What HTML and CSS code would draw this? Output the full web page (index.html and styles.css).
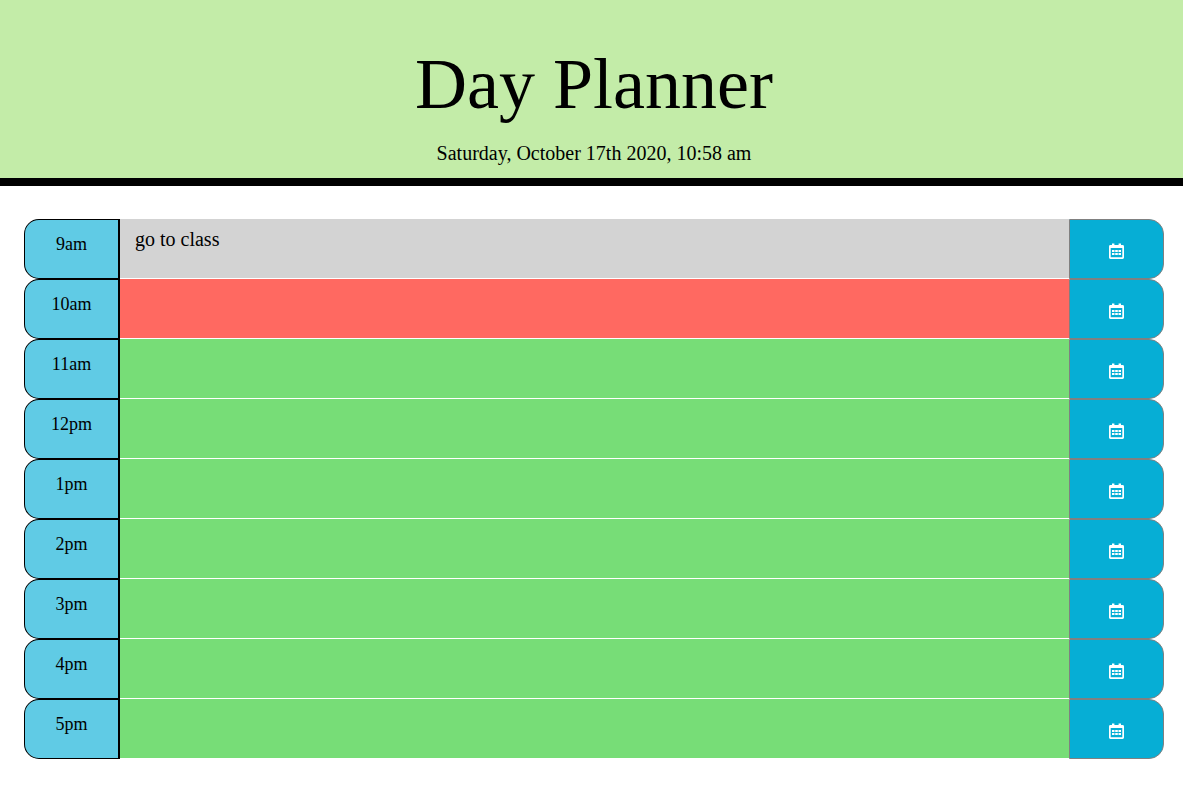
FILE: index.html
```html
<!DOCTYPE html>
<html lang="en">
<head>
<meta charset="utf-8">
<meta name="viewport" content="width=device-width, initial-scale=1">
<title>Day Planner</title>
<link rel="stylesheet" href="styles.css">
</head>
<body>
<svg class="sprite" aria-hidden="true">
  <symbol id="calendar" viewBox="0 0 15 16">
    <path fill="currentColor" fill-rule="evenodd" d="M3 .4h2.4V2h4.2V.4H12V2h1.6q1.4 0 1.4 1.4v11.2q0 1.4-1.4 1.4H1.4Q0 16 0 14.600V3.400Q0 2 1.400 2H3zM1.700 5v9.300h11.600V5z"/>
    <path fill="currentColor" d="M3 7h2.500v2H3zM6.200 7h2.600v2H6.200zM9.500 7H12v2H9.500zM3 10h2.500v2H3zM6.200 10h2.600v2H6.200zM9.500 10H12v2H9.500z"/>
  </symbol>
</svg>
<header class="banner">
  <h1 class="title">Day Planner</h1>
  <p class="date">Saturday, October 17th 2020, 10:58 am</p>
</header>
<main class="schedule">
  <div class="row">
    <label class="hour" for="h9">9am</label>
    <textarea class="entry past" id="h9">go to class</textarea>
    <button class="save" type="button" aria-label="Save 9am"><svg class="icon"><use href="#calendar"/></svg></button>
  </div>
  <div class="row">
    <label class="hour" for="h10">10am</label>
    <textarea class="entry present" id="h10"></textarea>
    <button class="save" type="button" aria-label="Save 10am"><svg class="icon"><use href="#calendar"/></svg></button>
  </div>
  <div class="row">
    <label class="hour" for="h11">11am</label>
    <textarea class="entry future" id="h11"></textarea>
    <button class="save" type="button" aria-label="Save 11am"><svg class="icon"><use href="#calendar"/></svg></button>
  </div>
  <div class="row">
    <label class="hour" for="h12">12pm</label>
    <textarea class="entry future" id="h12"></textarea>
    <button class="save" type="button" aria-label="Save 12pm"><svg class="icon"><use href="#calendar"/></svg></button>
  </div>
  <div class="row">
    <label class="hour" for="h13">1pm</label>
    <textarea class="entry future" id="h13"></textarea>
    <button class="save" type="button" aria-label="Save 1pm"><svg class="icon"><use href="#calendar"/></svg></button>
  </div>
  <div class="row">
    <label class="hour" for="h14">2pm</label>
    <textarea class="entry future" id="h14"></textarea>
    <button class="save" type="button" aria-label="Save 2pm"><svg class="icon"><use href="#calendar"/></svg></button>
  </div>
  <div class="row">
    <label class="hour" for="h15">3pm</label>
    <textarea class="entry future" id="h15"></textarea>
    <button class="save" type="button" aria-label="Save 3pm"><svg class="icon"><use href="#calendar"/></svg></button>
  </div>
  <div class="row">
    <label class="hour" for="h16">4pm</label>
    <textarea class="entry future" id="h16"></textarea>
    <button class="save" type="button" aria-label="Save 4pm"><svg class="icon"><use href="#calendar"/></svg></button>
  </div>
  <div class="row">
    <label class="hour" for="h17">5pm</label>
    <textarea class="entry future" id="h17"></textarea>
    <button class="save" type="button" aria-label="Save 5pm"><svg class="icon"><use href="#calendar"/></svg></button>
  </div>
</main>
</body>
</html>
```
FILE: styles.css
```css
* {
  box-sizing: border-box;
}

body {
  margin: 0;
  background: #fff;
  color: #000;
  font-family: "Liberation Serif", "Times New Roman", serif;
}

.sprite {
  display: none;
}

.banner {
  padding: 41px 19px 11px 24px;
  border-bottom: 8px solid #000;
  background: #c3eca8;
  text-align: center;
}

.title {
  margin: 0 0 12px;
  font-size: 72px;
  font-weight: 400;
  line-height: 86px;
}

.date {
  margin: 0;
  font-size: 20px;
  line-height: 28px;
}

.schedule {
  padding: 33px 19px 33px 24px;
}

.row {
  display: grid;
  grid-template-columns: 96px 1fr 95px;
  min-height: 60px;
}

.hour {
  padding-top: 13px;
  border: 1px solid #000;
  border-right-width: 2px;
  border-radius: 15px 0 0 15px;
  background: #60cbe5;
  font-size: 18px;
  line-height: 22px;
  text-align: center;
}

.entry {
  width: 100%;
  height: 60px;
  padding: 8px 15px;
  border: 0;
  border-bottom: 1px solid #fff;
  border-radius: 0;
  outline: 0;
  resize: none;
  overflow: auto;
  color: #000;
  font-family: inherit;
  font-size: 20px;
  line-height: 24px;
}

.past {
  background: #d3d3d3;
}

.present {
  background: #ff6961;
}

.future {
  background: #77dd77;
}

.save {
  display: flex;
  align-items: center;
  justify-content: center;
  padding: 4px 0 0;
  border: 1px solid #808080;
  border-radius: 0 15px 15px 0;
  background: #06aed5;
  color: #fff;
}

.icon {
  width: 15px;
  height: 16px;
}
```
